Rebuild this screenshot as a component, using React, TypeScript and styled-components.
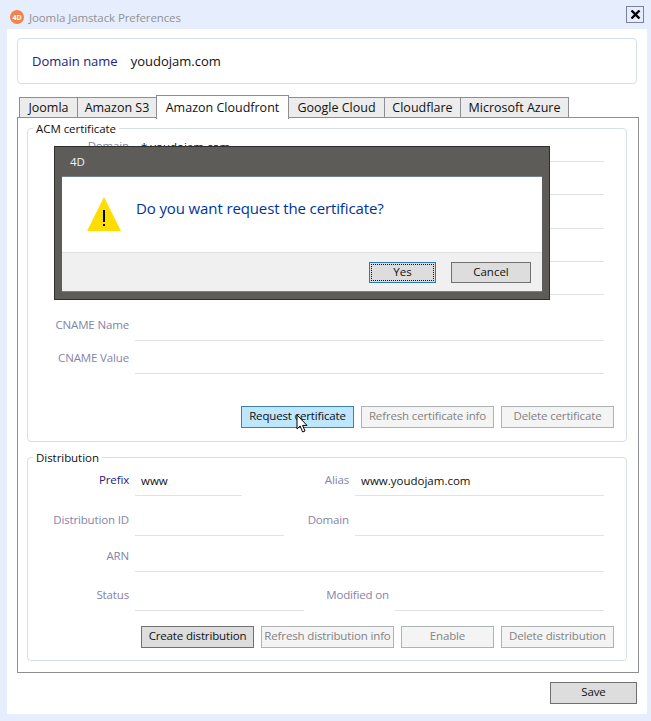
import styled, { createGlobalStyle } from "styled-components";

const GlobalStyle = createGlobalStyle`
  html, body {
    margin: 0;
    padding: 0;
    background: #e6edfd;
  }
  body {
    font-family: "Open Sans", "Liberation Sans", sans-serif;
    font-size: 12px;
  }
`;

const Window = styled.div`
  width: 651px;
  height: 721px;
  position: relative;
  overflow: hidden;
  display: flex;
  flex-direction: column;
  background: #e6edfd;
`;

const TitleBar = styled.div`
  box-sizing: border-box;
  height: 29px;
  padding: 5px 7px 0 10px;
  display: flex;
  align-items: center;
  gap: 5px;
  color: #929292;
  font-size: 11.5px;
  letter-spacing: -0.1px;
`;

const AppIcon = styled.div`
  width: 14px;
  height: 14px;
  border-radius: 50%;
  background: #f5824a;
  color: #fff;
  font-size: 7px;
  font-weight: 700;
  display: flex;
  align-items: center;
  justify-content: center;
`;

const Close = styled.div`
  margin: -5px 0 0 auto;
  box-sizing: border-box;
  width: 18px;
  height: 17px;
  border: 1px solid #7c80a0;
  display: flex;
  align-items: center;
  justify-content: center;
`;

const Content = styled.div`
  box-sizing: border-box;
  width: 640px;
  height: 685px;
  margin-left: 7px;
  padding: 9px 10px 0;
  background: #fff;
`;

const DomainCard = styled.div`
  box-sizing: border-box;
  width: 620px;
  height: 46px;
  border: 1px solid #d5dfe8;
  border-radius: 4px;
  display: flex;
  align-items: center;
  padding-left: 14px;
  gap: 13px;
  font-size: 13px;
  color: #111;
`;

const DomainLabel = styled.span`
  color: #23237a;
`;

const Tabs = styled.div`
  margin-top: 11px;
  padding-left: 2px;
  height: 23px;
  display: flex;
  align-items: flex-end;
`;

const Tab = styled.div<{ $active?: boolean; $width: number }>`
  width: ${(p) => p.$width}px;
  height: ${(p) => (p.$active ? 24 : 21)}px;
  box-sizing: border-box;
  border: 1px solid #8d8d96;
  border-bottom: ${(p) => (p.$active ? "none" : "1px solid #8d8d96")};
  margin-right: -1px;
  padding-bottom: 1px;
  background: ${(p) => (p.$active ? "#fff" : "#ececec")};
  position: relative;
  z-index: ${(p) => (p.$active ? 2 : 1)};
  margin-bottom: ${(p) => (p.$active ? -1 : 0)}px;
  display: flex;
  align-items: center;
  justify-content: center;
  font-size: 12.5px;
  color: #111;
`;

const Panel = styled.div`
  box-sizing: border-box;
  width: 622px;
  height: 556px;
  border: 1px solid #8d8d96;
  padding: 10px 11px 0 9px;
  margin-top: -1px;
`;

const Group = styled.div<{ $height: number; $top?: number }>`
  box-sizing: border-box;
  position: relative;
  height: ${(p) => p.$height}px;
  margin-top: ${(p) => p.$top ?? 0}px;
  border: 1px solid #d5dfe8;
  border-radius: 4px;
  padding: 0 22px 0 0;
`;

const Legend = styled.span`
  position: absolute;
  top: -8px;
  left: 5px;
  padding: 0 3px;
  background: #fff;
  font-size: 11.5px;
  letter-spacing: -0.05px;
  line-height: 16px;
  color: #111;
`;

const Row = styled.div<{ $top: number }>`
  display: flex;
  align-items: flex-end;
  height: 22px;
  margin-top: ${(p) => p.$top}px;
`;

const Label = styled.div<{ $width?: number; $strong?: boolean }>`
  box-sizing: border-box;
  flex: none;
  width: ${(p) => p.$width ?? 101}px;
  padding: 0 6px 8px 0;
  text-align: right;
  font-size: 11.5px;
  letter-spacing: -0.15px;
  line-height: 17px;
  color: ${(p) => (p.$strong ? "#23237a" : "#8484a8")};
`;

const LeadLabel = styled(Label)`
  width: 107px;
`;

const Field = styled.div<{ $width?: number }>`
  box-sizing: border-box;
  ${(p) => (p.$width ? `width: ${p.$width}px; flex: none;` : "flex: 1;")}
  height: 22px;
  border-bottom: 1px solid #dfe3e6;
  padding: 0 0 6px 6px;
  display: flex;
  align-items: flex-end;
  font-size: 11.5px;
  line-height: 17px;
  color: #111;
`;

const Buttons = styled.div<{ $top: number }>`
  display: flex;
  justify-content: flex-end;
  gap: 7px;
  margin-top: ${(p) => p.$top}px;
  margin-right: -10px;
`;

const Button = styled.div<{ $kind?: "hover" | "default" | "off"; $width: number }>`
  box-sizing: border-box;
  width: ${(p) => p.$width}px;
  height: 22px;
  padding-bottom: 3px;
  display: flex;
  align-items: center;
  justify-content: center;
  font-size: 11.5px;
  letter-spacing: -0.15px;
  white-space: nowrap;
  border: 1px solid
    ${(p) =>
      p.$kind === "hover" ? "#3c7fb1" : p.$kind === "off" ? "#adb2b5" : "#707070"};
  background: ${(p) =>
    p.$kind === "hover" ? "#bee6fd" : p.$kind === "off" ? "#f4f4f4" : "#dddddd"};
  color: ${(p) => (p.$kind === "off" ? "#838383" : "#111")};
`;

const Footer = styled.div`
  display: flex;
  justify-content: flex-end;
  margin-top: 9px;
  width: 620px;
`;

const CursorMark = styled.svg`
  position: absolute;
  left: 296px;
  top: 414px;
`;

const Dialog = styled.div`
  position: absolute;
  left: 54px;
  top: 146px;
  box-sizing: border-box;
  width: 496px;
  height: 154px;
  border: 1px solid #2e2e2e;
  background: #5d5c59;
  padding: 0 7px 7px;
  display: flex;
  flex-direction: column;
`;

const DialogTitle = styled.div`
  box-sizing: border-box;
  height: 30px;
  display: flex;
  align-items: center;
  padding-left: 8px;
  color: #f2f2f2;
  font-size: 11.5px;
  border-bottom: 1px solid #6e8296;
`;

const DialogBody = styled.div`
  box-sizing: border-box;
  height: 75px;
  background: #fff;
  display: flex;
  align-items: flex-start;
  padding: 20px 0 0 25px;
  gap: 15px;
`;

const DialogText = styled.div`
  margin-top: 1px;
  color: #003399;
  font-size: 15px;
  letter-spacing: -0.12px;
  line-height: 20px;
`;

const DialogFooter = styled.div`
  flex: 1;
  background: #f0f0f0;
  border-top: 1px solid #dfdfdf;
  border-bottom: 1px solid #6e8296;
  display: flex;
  justify-content: flex-end;
  gap: 15px;
  padding: 9px 11px 0 0;
`;

const DialogButton = styled.div<{ $focused?: boolean; $width: number }>`
  box-sizing: border-box;
  width: ${(p) => p.$width}px;
  height: 21px;
  padding-bottom: 2px;
  display: flex;
  align-items: center;
  justify-content: center;
  font-size: 11.5px;
  color: #111;
  background: #dddddd;
  border: 1px solid ${(p) => (p.$focused ? "#2b79b5" : "#707070")};
  outline: ${(p) => (p.$focused ? "1px dotted #111" : "none")};
  outline-offset: -3px;
`;

export default function App() {
  return (
    <Window>
      <GlobalStyle />
      <TitleBar>
        <AppIcon>4D</AppIcon>
        Joomla Jamstack Preferences
        <Close>
          <svg width="11" height="9" viewBox="0 0 11 9">
            <path d="M1.5 0.5 L9.5 8.5 M9.5 0.5 L1.5 8.5" stroke="#000" strokeWidth="2.4" />
          </svg>
        </Close>
      </TitleBar>
      <Content>
        <DomainCard>
          <DomainLabel>Domain name</DomainLabel>
          youdojam.com
        </DomainCard>
        <Tabs>
          <Tab $width={59}>Joomla</Tab>
          <Tab $width={80}>Amazon S3</Tab>
          <Tab $width={133} $active>Amazon Cloudfront</Tab>
          <Tab $width={97}>Google Cloud</Tab>
          <Tab $width={77}>Cloudflare</Tab>
          <Tab $width={109}>Microsoft Azure</Tab>
        </Tabs>
        <Panel>
          <Group $height={314}>
            <Legend>ACM certificate</Legend>
            <Row $top={11}>
              <LeadLabel>Domain</LeadLabel>
              <Field>*.youdojam.com</Field>
            </Row>
            <Row $top={11}><LeadLabel /><Field /></Row>
            <Row $top={12}><LeadLabel /><Field /></Row>
            <Row $top={11}><LeadLabel /><Field /></Row>
            <Row $top={11}><LeadLabel /><Field /></Row>
            <Row $top={24}>
              <LeadLabel>CNAME Name</LeadLabel>
              <Field />
            </Row>
            <Row $top={11}>
              <LeadLabel>CNAME Value</LeadLabel>
              <Field />
            </Row>
            <Buttons $top={32}>
              <Button $width={113} $kind="hover">Request certificate</Button>
              <Button $width={133} $kind="off">Refresh certificate info</Button>
              <Button $width={113} $kind="off">Delete certificate</Button>
            </Buttons>
          </Group>
          <Group $height={204} $top={15}>
            <Legend>Distribution</Legend>
            <Row $top={16}>
              <LeadLabel $strong>Prefix</LeadLabel>
              <Field $width={107}>www</Field>
              <Label $width={113}>Alias</Label>
              <Field>www.youdojam.com</Field>
            </Row>
            <Row $top={18}>
              <LeadLabel>Distribution ID</LeadLabel>
              <Field $width={149} />
              <Label $width={71}>Domain</Label>
              <Field />
            </Row>
            <Row $top={14}>
              <LeadLabel>ARN</LeadLabel>
              <Field />
            </Row>
            <Row $top={17}>
              <LeadLabel>Status</LeadLabel>
              <Field $width={169} />
              <Label $width={91}>Modified on</Label>
              <Field />
            </Row>
            <Buttons $top={15}>
              <Button $width={113}>Create distribution</Button>
              <Button $width={133} $kind="off">Refresh distribution info</Button>
              <Button $width={93} $kind="off">Enable</Button>
              <Button $width={113} $kind="off">Delete distribution</Button>
            </Buttons>
          </Group>
        </Panel>
        <Footer>
          <Button $width={87}>Save</Button>
        </Footer>
      </Content>
      <Dialog>
        <DialogTitle>4D</DialogTitle>
        <DialogBody>
          <svg width="34" height="34" viewBox="0 0 34 34">
            <path d="M17 0 L34 34 L0 34 Z" fill="#ffdd00" />
            <rect x="16" y="13" width="2" height="12" fill="#000" />
            <rect x="16" y="27" width="2" height="2" fill="#000" />
          </svg>
          <DialogText>Do you want request the certificate?</DialogText>
        </DialogBody>
        <DialogFooter>
          <DialogButton $width={67} $focused>Yes</DialogButton>
          <DialogButton $width={80}>Cancel</DialogButton>
        </DialogFooter>
      </Dialog>
      <CursorMark width="13" height="20" viewBox="0 0 13 20">
        <path d="M1 1 L1 15 L4.2 12 L6.6 18 L9 17 L6.6 11.4 L11 11.4 Z" fill="#fff" stroke="#000" strokeWidth="1" />
      </CursorMark>
    </Window>
  );
}
